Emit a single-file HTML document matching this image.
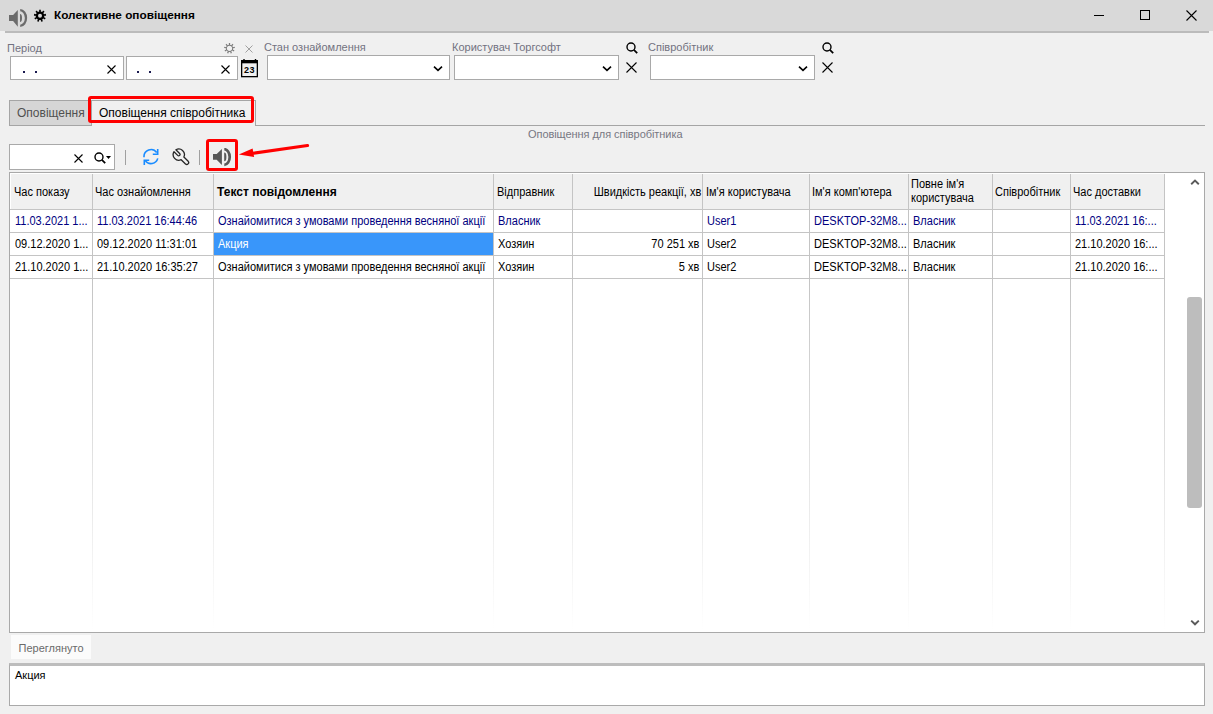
<!DOCTYPE html>
<html><head><meta charset="utf-8"><style>
html,body{margin:0;padding:0;}
body{width:1213px;height:714px;overflow:hidden;position:relative;background:#f0f0f0;font-family:"Liberation Sans", sans-serif;}
.t{position:absolute;white-space:nowrap;}
svg{display:block}
</style></head><body>
<div style="position:absolute;left:0px;top:0px;width:1213px;height:31px;background:#d9d9d9"></div>
<div style="position:absolute;left:5px;top:31px;width:1204px;height:2px;background:#bbbbbb"></div>
<svg style="position:absolute;left:9px;top:9px;" width="19" height="19" viewBox="0 0 19 19"><path d="M0 6.1h4.1l4.7-5.1v16.8l-4.7-5.9H0z" fill="#6b6b6b"/><path d="M11 5a2 4 0 0 1 0 8z" fill="#6b6b6b"/><path d="M11.2 1.2A5.8 7.8 0 0 1 11.2 16.8" stroke="#6b6b6b" stroke-width="2.3" fill="none"/></svg>
<svg style="position:absolute;left:33px;top:9px;" width="14" height="14" viewBox="0 0 14 14"><path d="M5.53 2.76 L6.22 2.57 L6.11 0.77 L7.89 0.77 L7.78 2.57 L8.47 2.76 L9.12 3.06 L10.20 1.60 L11.56 2.75 L10.32 4.06 L10.72 4.65 L11.03 5.29 L12.79 4.87 L13.10 6.63 L11.30 6.84 L11.23 7.55 L11.05 8.24 L12.67 9.05 L11.78 10.59 L10.27 9.59 L9.76 10.09 L9.18 10.51 L9.90 12.17 L8.23 12.78 L7.71 11.04 L7.00 11.10 L6.29 11.04 L5.77 12.78 L4.10 12.17 L4.82 10.51 L4.24 10.09 L3.73 9.59 L2.22 10.59 L1.33 9.05 L2.95 8.24 L2.77 7.55 L2.70 6.84 L0.90 6.63 L1.21 4.87 L2.97 5.29 L3.28 4.65 L3.68 4.06 L2.44 2.75 L3.80 1.60 L4.88 3.06Z" fill="#000"/><circle cx="7" cy="6.8" r="2.0" fill="#d9d9d9"/></svg>
<div class="t" style="left:54px;top:10.01px;font-size:11.8px;line-height:11.8px;color:#000;font-weight:bold;">Колективне оповіщення</div>
<div style="position:absolute;left:1094px;top:15px;width:10px;height:1px;background:#000"></div>
<div style="position:absolute;left:1140px;top:10px;width:10px;height:10px;border:1px solid #000;box-sizing:border-box"></div>
<svg style="position:absolute;left:1185.5px;top:9.5px;" width="11" height="11" viewBox="0 0 11 11"><path d="M0.5 0.5L10.5 10.5M10.5 0.5L0.5 10.5" stroke="#000" stroke-width="1.1"/></svg>
<div class="t" style="left:7px;top:42.69px;font-size:11px;line-height:11px;color:#727280;font-weight:normal;">Період</div>
<div class="t" style="left:264px;top:41.69px;font-size:11px;line-height:11px;color:#727280;font-weight:normal;">Стан ознайомлення</div>
<div class="t" style="left:452px;top:41.69px;font-size:11px;line-height:11px;color:#727280;font-weight:normal;">Користувач Торгсофт</div>
<div class="t" style="left:648px;top:41.69px;font-size:11px;line-height:11px;color:#727280;font-weight:normal;">Співробітник</div>
<div style="position:absolute;left:10px;top:56px;width:114px;height:24px;background:#fff;border:1px solid #a9a9a9;box-sizing:border-box"></div>
<div style="position:absolute;left:126px;top:56px;width:112px;height:24px;background:#fff;border:1px solid #a9a9a9;box-sizing:border-box"></div>
<div style="position:absolute;left:267px;top:55px;width:183px;height:25px;background:#fff;border:1px solid #a9a9a9;box-sizing:border-box"></div>
<div style="position:absolute;left:454px;top:55px;width:165px;height:25px;background:#fff;border:1px solid #a9a9a9;box-sizing:border-box"></div>
<div style="position:absolute;left:650px;top:55px;width:165px;height:25px;background:#fff;border:1px solid #a9a9a9;box-sizing:border-box"></div>
<div style="position:absolute;left:23px;top:71px;width:2px;height:2px;background:#1a1a50"></div>
<div style="position:absolute;left:35px;top:71px;width:2px;height:2px;background:#1a1a50"></div>
<div style="position:absolute;left:137px;top:71px;width:2px;height:2px;background:#1a1a50"></div>
<div style="position:absolute;left:149px;top:71px;width:2px;height:2px;background:#1a1a50"></div>
<svg style="position:absolute;left:107px;top:65px;" width="9" height="9" viewBox="0 0 9 9"><path d="M0.5 0.5L8.5 8.5M8.5 0.5L0.5 8.5" stroke="#000" stroke-width="1.1"/></svg>
<svg style="position:absolute;left:221px;top:65px;" width="9" height="9" viewBox="0 0 9 9"><path d="M0.5 0.5L8.5 8.5M8.5 0.5L0.5 8.5" stroke="#000" stroke-width="1.1"/></svg>
<svg style="position:absolute;left:223px;top:42px;" width="13" height="13" viewBox="0 0 13 13"><path d="M5.27 2.92 L5.94 2.74 L5.82 0.94 L7.18 0.94 L7.06 2.74 L7.73 2.92 L8.35 3.21 L9.43 1.76 L10.46 2.63 L9.22 3.94 L9.62 4.50 L9.90 5.13 L11.66 4.70 L11.89 6.04 L10.10 6.24 L10.05 6.93 L9.86 7.59 L11.48 8.39 L10.80 9.56 L9.30 8.57 L8.81 9.06 L8.25 9.45 L8.97 11.10 L7.70 11.57 L7.19 9.83 L6.50 9.90 L5.81 9.83 L5.30 11.57 L4.03 11.10 L4.75 9.45 L4.19 9.06 L3.70 8.57 L2.20 9.56 L1.52 8.39 L3.14 7.59 L2.95 6.93 L2.90 6.24 L1.11 6.04 L1.34 4.70 L3.10 5.13 L3.38 4.50 L3.78 3.94 L2.54 2.63 L3.57 1.76 L4.65 3.21Z" fill="#7a7a7a"/><circle cx="6.5" cy="6.3" r="2.6" fill="#f0f0f0"/></svg>
<svg style="position:absolute;left:245px;top:45px;" width="8" height="8" viewBox="0 0 8 8"><path d="M0.5 0.5L7.5 7.5M7.5 0.5L0.5 7.5" stroke="#a0a0a0" stroke-width="1"/></svg>
<svg style="position:absolute;left:241px;top:59px;" width="17" height="19" viewBox="0 0 17 19"><rect x="0.65" y="1.65" width="15.7" height="16" fill="#f0f0f0" stroke="#000" stroke-width="1.3"/><rect x="0" y="1" width="17" height="3.3" fill="#000"/><rect x="2.3" y="0" width="1.4" height="2" fill="#000"/><rect x="13.8" y="0" width="1.4" height="2" fill="#000"/><text x="8.6" y="14.3" font-family="Liberation Sans" font-weight="bold" font-size="9" letter-spacing="0.5" text-anchor="middle" fill="#000">23</text></svg>
<svg style="position:absolute;left:433px;top:65px;" width="10" height="7" viewBox="0 0 10 7"><path d="M1 1.6L5 5.4L9 1.6" stroke="#000" stroke-width="1.6" fill="none"/></svg>
<svg style="position:absolute;left:602px;top:65px;" width="10" height="7" viewBox="0 0 10 7"><path d="M1 1.6L5 5.4L9 1.6" stroke="#000" stroke-width="1.6" fill="none"/></svg>
<svg style="position:absolute;left:798px;top:65px;" width="10" height="7" viewBox="0 0 10 7"><path d="M1 1.6L5 5.4L9 1.6" stroke="#000" stroke-width="1.6" fill="none"/></svg>
<svg style="position:absolute;left:626px;top:42px;" width="12" height="12" viewBox="0 0 12 12"><circle cx="5" cy="5" r="4" stroke="#000" stroke-width="1.4" fill="none"/><path d="M7.9 7.9L11.2 11.2" stroke="#000" stroke-width="1.7"/></svg>
<svg style="position:absolute;left:822px;top:42px;" width="12" height="12" viewBox="0 0 12 12"><circle cx="5" cy="5" r="4" stroke="#000" stroke-width="1.4" fill="none"/><path d="M7.9 7.9L11.2 11.2" stroke="#000" stroke-width="1.7"/></svg>
<svg style="position:absolute;left:626px;top:62px;" width="11" height="11" viewBox="0 0 11 11"><path d="M0.5 0.5L10.5 10.5M10.5 0.5L0.5 10.5" stroke="#000" stroke-width="1.1"/></svg>
<svg style="position:absolute;left:822px;top:62px;" width="11" height="11" viewBox="0 0 11 11"><path d="M0.5 0.5L10.5 10.5M10.5 0.5L0.5 10.5" stroke="#000" stroke-width="1.1"/></svg>
<div style="position:absolute;left:9px;top:100px;width:83px;height:26px;background:#d6d6d6;border:1px solid #a5a5a5;box-sizing:border-box"></div>
<div class="t" style="left:17px;top:106.84px;font-size:12px;line-height:12px;color:#505050;font-weight:normal;">Оповіщення</div>
<div style="position:absolute;left:91px;top:100px;width:165px;height:26px;background:#f0f0f0;border:1px solid #a5a5a5;border-bottom:none;box-sizing:border-box"></div>
<div class="t" style="left:99px;top:106.84px;font-size:12px;line-height:12px;color:#000;font-weight:normal;">Оповіщення співробітника</div>
<div style="position:absolute;left:256px;top:125px;width:949px;height:1px;background:#a5a5a5"></div>
<div style="position:absolute;left:88px;top:96px;width:166px;height:27px;border:3px solid #f00;border-radius:3px;box-sizing:border-box"></div>
<div class="t" style="left:528px;top:128.69px;font-size:11px;line-height:11px;color:#777782;font-weight:normal;letter-spacing:-0.06px;">Оповіщення для співробітника</div>
<div style="position:absolute;left:9px;top:144px;width:106px;height:26px;background:#fff;border:1px solid #a9a9a9;box-sizing:border-box"></div>
<svg style="position:absolute;left:74px;top:154px;" width="9" height="9" viewBox="0 0 9 9"><path d="M0.5 0.5L8.5 8.5M8.5 0.5L0.5 8.5" stroke="#000" stroke-width="1.1"/></svg>
<svg style="position:absolute;left:94px;top:152px;" width="12" height="12" viewBox="0 0 12 12"><circle cx="5" cy="5" r="4" stroke="#000" stroke-width="1.4" fill="none"/><path d="M7.9 7.9L11.2 11.2" stroke="#000" stroke-width="1.7"/></svg>
<svg style="position:absolute;left:106px;top:156px;" width="6" height="4" viewBox="0 0 6 4"><path d="M0 0H5L2.5 3z" fill="#000"/></svg>
<div style="position:absolute;left:125px;top:150px;width:1px;height:15px;background:#a0a0a0"></div>
<div style="position:absolute;left:199px;top:150px;width:1px;height:15px;background:#a0a0a0"></div>
<svg style="position:absolute;left:142px;top:148px;" width="18" height="18" viewBox="0 0 18 18"><path d="M2.03 9.21 A7.0 7.0 0 0 1 14.73 4.58" stroke="#1a8cff" stroke-width="1.6" fill="none"/><path d="M15.76 10.41 A7.0 7.0 0 0 1 3.27 12.62" stroke="#1a8cff" stroke-width="1.6" fill="none"/><path d="M15.7 1V6.2H10.8" stroke="#1a8cff" stroke-width="1.6" fill="none"/><path d="M2.3 17V12.3H7.2" stroke="#1a8cff" stroke-width="1.6" fill="none"/></svg>
<svg style="position:absolute;left:172px;top:148px;" width="19" height="18" viewBox="0 0 19 18"><path d="M2.00 3.71 A5.6 5.6 0 0 0 9.18 11.67 L13.52 16.00 A1.9 1.9 0 0 0 16.20 13.32 L11.87 8.98 A5.6 5.6 0 0 0 3.91 1.80 L7.61 5.50 A1.35 1.35 0 0 1 5.70 7.41 Z" stroke="#262626" stroke-width="1.3" fill="none" stroke-linejoin="round"/></svg>
<div style="position:absolute;left:206px;top:139px;width:32px;height:32px;border:3px solid #f00;border-radius:3px;box-sizing:border-box"></div>
<svg style="position:absolute;left:213px;top:148px;" width="19" height="19" viewBox="0 0 19 19"><path d="M0 6h3.7l5.2-5.1v16.1l-5.2-5.3H0z" fill="#585858"/><path d="M11.2 4.6a2.2 4.3 0 0 1 0 8.6z" fill="#585858"/><path d="M11.3 1.2A5.4 7.8 0 0 1 11.3 16.8" stroke="#585858" stroke-width="2.7" fill="none"/></svg>
<svg style="position:absolute;left:236px;top:140px;" width="75" height="20" viewBox="0 0 75 20"><path d="M71.5 5.5L15 13.5" stroke="#f00" stroke-width="3.2" stroke-linecap="round"/><path d="M2.8 14.4L16.6 8.4L18.1 16.9z" fill="#f00"/></svg>
<div style="position:absolute;left:9px;top:172px;width:1196px;height:461px;background:#fff;border:1px solid #a9a9a9;box-sizing:border-box"></div>
<div style="position:absolute;left:11px;top:174px;width:1154px;height:36px;background:#f0f0f0"></div>
<div style="position:absolute;left:92px;top:174px;width:1px;height:104px;background:#c4c4c4"></div>
<div style="position:absolute;left:92px;top:278px;width:1px;height:352px;background:linear-gradient(#c4c4c4,#fff)"></div>
<div style="position:absolute;left:213px;top:174px;width:1px;height:104px;background:#c4c4c4"></div>
<div style="position:absolute;left:213px;top:278px;width:1px;height:352px;background:linear-gradient(#c4c4c4,#fff)"></div>
<div style="position:absolute;left:493px;top:174px;width:1px;height:104px;background:#c4c4c4"></div>
<div style="position:absolute;left:493px;top:278px;width:1px;height:352px;background:linear-gradient(#c4c4c4,#fff)"></div>
<div style="position:absolute;left:572px;top:174px;width:1px;height:104px;background:#c4c4c4"></div>
<div style="position:absolute;left:572px;top:278px;width:1px;height:352px;background:linear-gradient(#c4c4c4,#fff)"></div>
<div style="position:absolute;left:702px;top:174px;width:1px;height:104px;background:#c4c4c4"></div>
<div style="position:absolute;left:702px;top:278px;width:1px;height:352px;background:linear-gradient(#c4c4c4,#fff)"></div>
<div style="position:absolute;left:809px;top:174px;width:1px;height:104px;background:#c4c4c4"></div>
<div style="position:absolute;left:809px;top:278px;width:1px;height:352px;background:linear-gradient(#c4c4c4,#fff)"></div>
<div style="position:absolute;left:908px;top:174px;width:1px;height:104px;background:#c4c4c4"></div>
<div style="position:absolute;left:908px;top:278px;width:1px;height:352px;background:linear-gradient(#c4c4c4,#fff)"></div>
<div style="position:absolute;left:992px;top:174px;width:1px;height:104px;background:#c4c4c4"></div>
<div style="position:absolute;left:992px;top:278px;width:1px;height:352px;background:linear-gradient(#c4c4c4,#fff)"></div>
<div style="position:absolute;left:1070px;top:174px;width:1px;height:104px;background:#c4c4c4"></div>
<div style="position:absolute;left:1070px;top:278px;width:1px;height:352px;background:linear-gradient(#c4c4c4,#fff)"></div>
<div style="position:absolute;left:1164px;top:174px;width:1px;height:104px;background:#c4c4c4"></div>
<div style="position:absolute;left:1164px;top:278px;width:1px;height:352px;background:linear-gradient(#c4c4c4,#fff)"></div>
<div style="position:absolute;left:10px;top:209px;width:1155px;height:1px;background:#c4c4c4"></div>
<div style="position:absolute;left:10px;top:232px;width:1155px;height:1px;background:#c4c4c4"></div>
<div style="position:absolute;left:10px;top:255px;width:1155px;height:1px;background:#c4c4c4"></div>
<div style="position:absolute;left:10px;top:278px;width:1155px;height:1px;background:#c4c4c4"></div>
<div class="t" style="left:14px;top:185.84px;font-size:12px;line-height:12px;color:#000;font-weight:normal;transform:scaleX(0.917);transform-origin:left center;">Час показу</div>
<div class="t" style="left:95px;top:185.84px;font-size:12px;line-height:12px;color:#000;font-weight:normal;transform:scaleX(0.917);transform-origin:left center;">Час ознайомлення</div>
<div class="t" style="left:217px;top:185.84px;font-size:12px;line-height:12px;color:#000;font-weight:bold;">Текст повідомлення</div>
<div class="t" style="left:497px;top:185.84px;font-size:12px;line-height:12px;color:#000;font-weight:normal;transform:scaleX(0.917);transform-origin:left center;">Відправник</div>
<div class="t" style="right:512px;top:185.84px;font-size:12px;line-height:12px;color:#000;font-weight:normal;transform:scaleX(0.917);transform-origin:right center;">Швидкість реакції, хв</div>
<div class="t" style="left:706px;top:185.84px;font-size:12px;line-height:12px;color:#000;font-weight:normal;transform:scaleX(0.917);transform-origin:left center;">Ім'я користувача</div>
<div class="t" style="left:812px;top:185.84px;font-size:12px;line-height:12px;color:#000;font-weight:normal;transform:scaleX(0.917);transform-origin:left center;">Ім'я комп'ютера</div>
<div class="t" style="left:911px;top:177.84px;font-size:12px;line-height:12px;color:#000;font-weight:normal;transform:scaleX(0.917);transform-origin:left center;">Повне ім'я</div>
<div class="t" style="left:911px;top:191.84px;font-size:12px;line-height:12px;color:#000;font-weight:normal;transform:scaleX(0.917);transform-origin:left center;">користувача</div>
<div class="t" style="left:995px;top:185.84px;font-size:12px;line-height:12px;color:#000;font-weight:normal;transform:scaleX(0.917);transform-origin:left center;">Співробітник</div>
<div class="t" style="left:1073px;top:185.84px;font-size:12px;line-height:12px;color:#000;font-weight:normal;transform:scaleX(0.917);transform-origin:left center;">Час доставки</div>
<div style="position:absolute;left:214px;top:233px;width:279px;height:22px;background:#3996fa"></div>
<div class="t" style="left:15px;top:214.84px;font-size:12px;line-height:12px;color:#000080;font-weight:normal;transform:scaleX(0.917);transform-origin:left center;">11.03.2021 1...</div>
<div class="t" style="left:97px;top:214.84px;font-size:12px;line-height:12px;color:#000080;font-weight:normal;transform:scaleX(0.917);transform-origin:left center;">11.03.2021 16:44:46</div>
<div class="t" style="left:218px;top:214.84px;font-size:12px;line-height:12px;color:#000080;font-weight:normal;transform:scaleX(0.917);transform-origin:left center;">Ознайомитися з умовами проведення весняної акції</div>
<div class="t" style="left:498px;top:214.84px;font-size:12px;line-height:12px;color:#000080;font-weight:normal;transform:scaleX(0.917);transform-origin:left center;">Власник</div>
<div class="t" style="left:707px;top:214.84px;font-size:12px;line-height:12px;color:#000080;font-weight:normal;transform:scaleX(0.917);transform-origin:left center;">User1</div>
<div class="t" style="left:814px;top:214.84px;font-size:12px;line-height:12px;color:#000080;font-weight:normal;transform:scaleX(0.917);transform-origin:left center;">DESKTOP-32M8...</div>
<div class="t" style="left:913px;top:214.84px;font-size:12px;line-height:12px;color:#000080;font-weight:normal;transform:scaleX(0.917);transform-origin:left center;">Власник</div>
<div class="t" style="left:1075px;top:214.84px;font-size:12px;line-height:12px;color:#000080;font-weight:normal;transform:scaleX(0.917);transform-origin:left center;">11.03.2021 16:...</div>
<div class="t" style="left:15px;top:237.84px;font-size:12px;line-height:12px;color:#000;font-weight:normal;transform:scaleX(0.917);transform-origin:left center;">09.12.2020 1...</div>
<div class="t" style="left:97px;top:237.84px;font-size:12px;line-height:12px;color:#000;font-weight:normal;transform:scaleX(0.917);transform-origin:left center;">09.12.2020 11:31:01</div>
<div class="t" style="left:218px;top:237.84px;font-size:12px;line-height:12px;color:#fff;font-weight:normal;transform:scaleX(0.917);transform-origin:left center;">Акция</div>
<div class="t" style="left:498px;top:237.84px;font-size:12px;line-height:12px;color:#000;font-weight:normal;transform:scaleX(0.917);transform-origin:left center;">Хозяин</div>
<div class="t" style="right:514px;top:237.84px;font-size:12px;line-height:12px;color:#000;font-weight:normal;transform:scaleX(0.917);transform-origin:right center;">70 251 хв</div>
<div class="t" style="left:707px;top:237.84px;font-size:12px;line-height:12px;color:#000;font-weight:normal;transform:scaleX(0.917);transform-origin:left center;">User2</div>
<div class="t" style="left:814px;top:237.84px;font-size:12px;line-height:12px;color:#000;font-weight:normal;transform:scaleX(0.917);transform-origin:left center;">DESKTOP-32M8...</div>
<div class="t" style="left:913px;top:237.84px;font-size:12px;line-height:12px;color:#000;font-weight:normal;transform:scaleX(0.917);transform-origin:left center;">Власник</div>
<div class="t" style="left:1075px;top:237.84px;font-size:12px;line-height:12px;color:#000;font-weight:normal;transform:scaleX(0.917);transform-origin:left center;">21.10.2020 16:...</div>
<div class="t" style="left:15px;top:260.84px;font-size:12px;line-height:12px;color:#000;font-weight:normal;transform:scaleX(0.917);transform-origin:left center;">21.10.2020 1...</div>
<div class="t" style="left:97px;top:260.84px;font-size:12px;line-height:12px;color:#000;font-weight:normal;transform:scaleX(0.917);transform-origin:left center;">21.10.2020 16:35:27</div>
<div class="t" style="left:218px;top:260.84px;font-size:12px;line-height:12px;color:#000;font-weight:normal;transform:scaleX(0.917);transform-origin:left center;">Ознайомитися з умовами проведення весняної акції</div>
<div class="t" style="left:498px;top:260.84px;font-size:12px;line-height:12px;color:#000;font-weight:normal;transform:scaleX(0.917);transform-origin:left center;">Хозяин</div>
<div class="t" style="right:514px;top:260.84px;font-size:12px;line-height:12px;color:#000;font-weight:normal;transform:scaleX(0.917);transform-origin:right center;">5 хв</div>
<div class="t" style="left:707px;top:260.84px;font-size:12px;line-height:12px;color:#000;font-weight:normal;transform:scaleX(0.917);transform-origin:left center;">User2</div>
<div class="t" style="left:814px;top:260.84px;font-size:12px;line-height:12px;color:#000;font-weight:normal;transform:scaleX(0.917);transform-origin:left center;">DESKTOP-32M8...</div>
<div class="t" style="left:913px;top:260.84px;font-size:12px;line-height:12px;color:#000;font-weight:normal;transform:scaleX(0.917);transform-origin:left center;">Власник</div>
<div class="t" style="left:1075px;top:260.84px;font-size:12px;line-height:12px;color:#000;font-weight:normal;transform:scaleX(0.917);transform-origin:left center;">21.10.2020 16:...</div>
<div style="position:absolute;left:1165px;top:173px;width:39px;height:459px;background:#fff"></div>
<svg style="position:absolute;left:1189.6px;top:179px;" width="10" height="7" viewBox="0 0 10 7"><path d="M1.2 5.3L5 1.6L8.8 5.3" stroke="#5a5a5a" stroke-width="1.9" fill="none"/></svg>
<div style="position:absolute;left:1187px;top:297px;width:15px;height:211px;background:#bdbdbd;border-radius:3px"></div>
<svg style="position:absolute;left:1189.6px;top:618.5px;" width="10" height="7" viewBox="0 0 10 7"><path d="M1.2 1.6L5 5.3L8.8 1.6" stroke="#5a5a5a" stroke-width="1.9" fill="none"/></svg>
<div style="position:absolute;left:11px;top:635px;width:80px;height:24px;background:#fbfbfb"></div>
<div class="t" style="left:18.5px;top:642.69px;font-size:11px;line-height:11px;color:#6a6a6a;font-weight:normal;">Переглянуто</div>
<div style="position:absolute;left:9px;top:663px;width:1196px;height:43px;background:#fff;border:1px solid #a9a9a9;border-top:3px solid #bdbdbd;box-sizing:border-box"></div>
<div class="t" style="left:15px;top:669.69px;font-size:11px;line-height:11px;color:#000;font-weight:normal;">Акция</div>
</body></html>
